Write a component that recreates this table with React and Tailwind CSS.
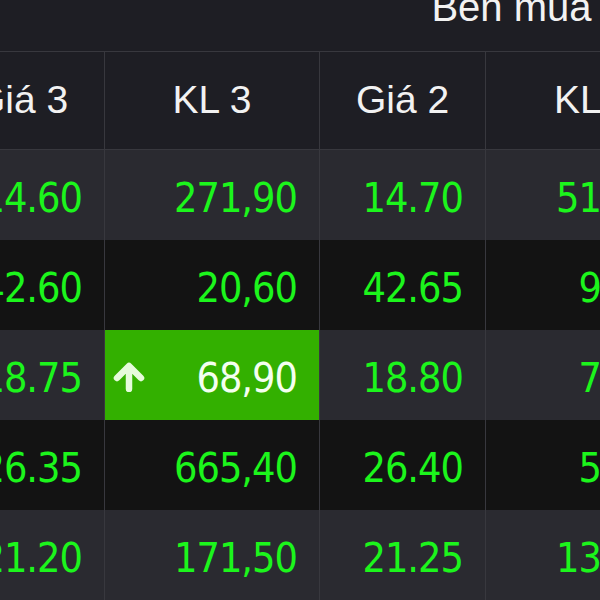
const columns = [
  { key: "g3", label: "Giá 3", w: "w-[166px]" },
  { key: "k3", label: "KL 3", w: "w-[215px]" },
  { key: "g2", label: "Giá 2", w: "w-[166px]" },
  { key: "k2", label: "KL 2", w: "w-[216px]" },
  { key: "g1", label: "Giá 1", w: "w-[166px]" },
  { key: "k1", label: "KL 1", w: "w-[216px]" },
];

const rows = [
  { g3: "14.60", k3: "271,90", g2: "14.70", k2: "512,40", g1: "14.80", k1: "388,10" },
  { g3: "42.60", k3: "20,60", g2: "42.65", k2: "92,10", g1: "42.70", k1: "45,20" },
  { g3: "18.75", k3: "68,90", g2: "18.80", k2: "74,50", g1: "18.85", k1: "60,30", up: "k3" },
  { g3: "26.35", k3: "665,40", g2: "26.40", k2: "54,80", g1: "26.45", k1: "210,70" },
  { g3: "21.20", k3: "171,50", g2: "21.25", k2: "131,20", g1: "21.30", k1: "96,40" },
];

const ArrowUp = () => (
  <svg width="32" height="30" viewBox="0 0 32 30" className="shrink-0 mt-[-4px]">
    <path d="M16 27V6M4 16L16 4L28 16" fill="none" stroke="#e6fbdc" strokeWidth="6.5" strokeLinecap="round" strokeLinejoin="round" />
  </svg>
);

export default function App() {
  return (
    <div className="w-[600px] h-[600px] overflow-hidden bg-[#1e1e24]">
      <div className="ml-[-61px] mt-[-40px] w-[1145px]">
        <div className="h-[92px] flex items-center justify-center border-b border-[#38383e] text-[#f2f2f2] text-[40px] font-['Liberation_Sans',Arial,sans-serif]">
          <span className="pt-[2px]">Bên mua</span>
        </div>
        <div className="flex h-[98px] border-b border-[#38383e]">
          {columns.map((c) => (
            <div
              key={c.key}
              className={`${c.w} shrink-0 border-r border-[#38383e] flex items-center justify-center text-[39px] text-[#f2f2f2] font-['Liberation_Sans',Arial,sans-serif]`}
            >
              {c.label}
            </div>
          ))}
        </div>
        {rows.map((r, i) => (
          <div key={i} className={`flex h-[90px] ${i % 2 === 0 ? "bg-[#2a2a30]" : "bg-[#131313]"}`}>
            {columns.map((c) => {
              const hot = r.up === c.key;
              return (
                <div
                  key={c.key}
                  className={`${c.w} shrink-0 border-r border-[#38383e] flex items-center pt-[8px] pr-[22px] text-[41px] tracking-[-1px] font-['DejaVu_Sans_Condensed','DejaVu_Sans',sans-serif] ${
                    hot ? "bg-[#33b000] text-[#f4fff0] justify-between pl-[8px]" : "text-[#1cf51c] justify-end"
                  }`}
                >
                  {hot && <ArrowUp />}
                  <span>{r[c.key]}</span>
                </div>
              );
            })}
          </div>
        ))}
      </div>
    </div>
  );
}
